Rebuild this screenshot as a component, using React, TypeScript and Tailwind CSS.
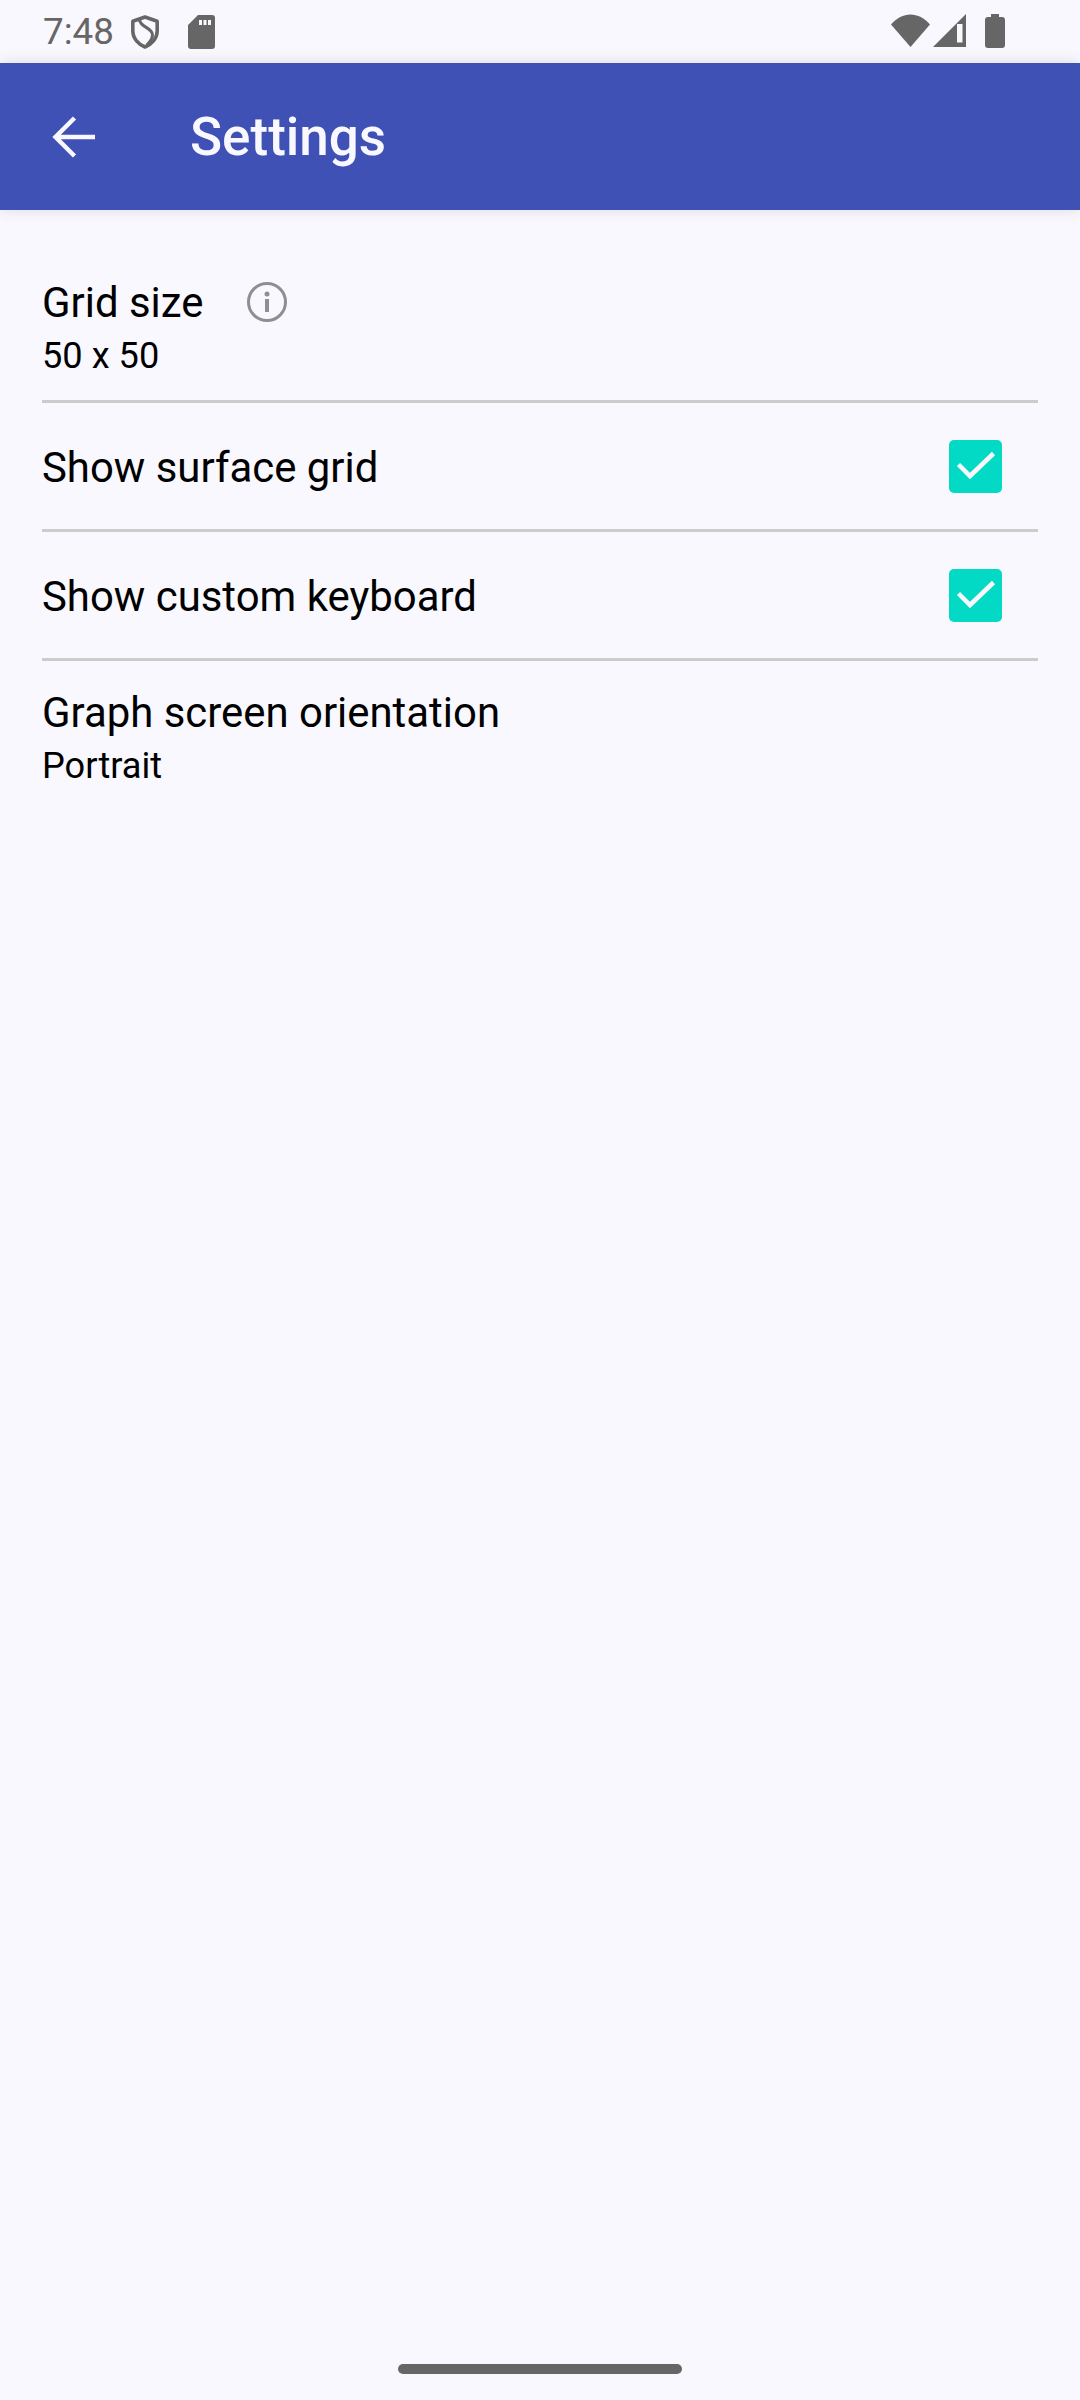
export default function App() {
  const title = "text-[41.9px] leading-[48px] text-black";
  const sub = "text-[36.2px] leading-[42px] text-black";
  const Check = () => (
    <div className="flex h-[53px] w-[53px] items-center justify-center rounded-[5px] bg-[#03dac5]">
      <svg width="53" height="53" viewBox="0 0 53 53" fill="none">
        <path d="M9.500 24.500 L21 36 L44.500 13.500" stroke="#f9f8ff" strokeWidth="4.500" />
      </svg>
    </div>
  );
  return (
    <div className="flex h-[2400px] w-[1080px] flex-col overflow-hidden bg-[#f9f8ff] font-['Roboto',sans-serif]">
      <div className="flex h-[63px] items-start justify-between pl-[43px] pr-[75px] pt-[11px]">
        <div className="flex items-center">
          <span className="text-[36.75px] leading-[42px] text-[#666666]">7:48</span>
          <svg className="ml-[16px]" width="30" height="36" viewBox="0 0 32 36" fill="none">
            <path d="M16 2 L29 6.500 V17 C29 25 23 31 16 34 C9 31 3 25 3 17 V6.500 Z" stroke="#666666" strokeWidth="3.800" strokeLinejoin="round" />
            <path d="M10 4 C10 13 24 13 24 21 C24 25 21 29 18 32" stroke="#666666" strokeWidth="3.200" />
          </svg>
          <svg className="ml-[28px]" width="27" height="34" viewBox="0 0 27 34">
            <path fillRule="evenodd" fill="#666666" d="M10 0 H24 Q27 0 27 3 V31 Q27 34 24 34 H3 Q0 34 0 31 V10 Z M11 5 V10 H14 V5 Z M15.500 5 V10 H18.500 V5 Z M20 5 V10 H23 V5 Z" />
          </svg>
        </div>
        <div className="flex items-start pt-[3px]">
          <svg width="39" height="33" viewBox="0 0 39 33">
            <path fill="#666666" d="M0 10.500 C11 -3 28 -3 39 10.500 L19.500 33 Z" />
          </svg>
          <svg className="ml-[3px]" width="33" height="33" viewBox="0 0 33 33">
            <path fillRule="evenodd" fill="#666666" d="M33 0 V33 H0 Z M24 10 V28.500 H29.500 V10 Z" />
          </svg>
          <svg className="ml-[19px]" width="20" height="34" viewBox="0 0 20 34">
            <path fill="#666666" d="M6 0 H14 V3 H17 Q20 3 20 6 V31 Q20 34 17 34 H3 Q0 34 0 31 V6 Q0 3 3 3 H6 Z" />
          </svg>
        </div>
      </div>

      <div className="flex h-[147px] items-center bg-[#3f51b5] shadow-[0_0_14px_rgba(0,0,0,0.12)]">
        <svg className="ml-[52px]" width="44" height="42" viewBox="0 0 44 42" fill="none">
          <path d="M43 21 H3 M22.500 2 L3.500 21 L22.500 40" stroke="#f9f8ff" strokeWidth="4.500" />
        </svg>
        <span className="ml-[94px] mt-[1px] text-[53px] font-medium leading-[60px] text-[#f9f8ff]">Settings</span>
      </div>

      <div className="ml-[42px] mr-[42px] flex flex-col">
        <div className="h-[193px] border-b-[3px] border-[#cccccc] pt-[69px]">
          <div className="flex items-center">
            <span className={title}>Grid size</span>
            <svg className="ml-[44px] mt-[-2px]" width="40" height="40" viewBox="0 0 40 40" fill="none">
              <circle cx="20" cy="20" r="18.500" stroke="#8e8f94" strokeWidth="3" />
              <circle cx="20" cy="12" r="2.500" fill="#8e8f94" />
              <rect x="18" y="17" width="4" height="13" fill="#8e8f94" />
            </svg>
          </div>
          <div className={`${sub} mt-[8px]`}>50 x 50</div>
        </div>
        <div className="flex h-[129px] items-center justify-between border-b-[3px] border-[#cccccc] pr-[36px]">
          <span className={`${title} mt-[4px]`}>Show surface grid</span>
          <Check />
        </div>
        <div className="flex h-[129px] items-center justify-between border-b-[3px] border-[#cccccc] pr-[36px]">
          <span className={`${title} mt-[4px]`}>Show custom keyboard</span>
          <Check />
        </div>
        <div className="pt-[28px]">
          <div className={title}>Graph screen orientation</div>
          <div className={`${sub} mt-[8px]`}>Portrait</div>
        </div>
      </div>

      <div className="mt-auto mb-[26px] flex justify-center">
        <div className="h-[10px] w-[284px] rounded-full bg-[#666666]" />
      </div>
    </div>
  );
}
